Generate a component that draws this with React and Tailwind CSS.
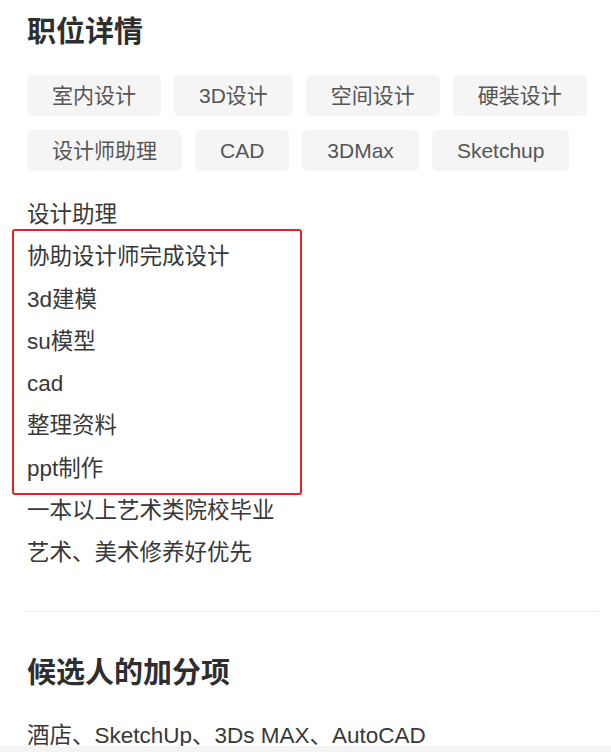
import React from 'react';

const tags = [
  ['室内设计', '3D设计', '空间设计', '硬装设计'],
  ['设计师助理', 'CAD', '3DMax', 'Sketchup'],
];

const boxed = ['协助设计师完成设计', '3d建模', 'su模型', 'cad', '整理资料', 'ppt制作'];

const font = { fontFamily: '"Liberation Sans", "Noto Sans CJK SC", sans-serif' };

export default function App() {
  return (
    <div className="w-[611px] h-[752px] bg-white flex flex-col overflow-hidden" style={font}>
      <div className="flex-1 overflow-hidden pl-[27px] pr-[13px] pt-[12px] text-[#333]">
        <h1 className="text-[29px] leading-[40px] font-bold text-[#2e2e2e]">职位详情</h1>

        <div className="mt-[23px] flex flex-col gap-[14px]">
          {tags.map((row, i) => (
            <div key={i} className="flex gap-[13px]">
              {row.map((t) => (
                <span
                  key={t}
                  className="h-[41px] px-[25px] flex items-center rounded-[5px] bg-[#f5f5f5] text-[21px] text-[#555]"
                >
                  {t}
                </span>
              ))}
            </div>
          ))}
        </div>

        <div className="mt-[23px] text-[22.5px] leading-[42.3px] text-[#383838]">
          <p>设计助理</p>
          <div className="relative">
            {boxed.map((t) => (
              <p key={t}>{t}</p>
            ))}
            <span className="absolute -top-[7px] -bottom-[5px] -left-[15px] w-[290px] border-2 border-[#e8231d] rounded-[3px] pointer-events-none" />
          </div>
          <p>一本以上艺术类院校毕业</p>
          <p>艺术、美术修养好优先</p>
        </div>

        <div className="mt-[36px] -ml-[2px] h-px bg-[#efefef]" />

        <h2 className="mt-[41px] text-[29px] leading-[40px] font-bold text-[#2e2e2e]">候选人的加分项</h2>
        <p className="mt-[22px] text-[22.5px] leading-[42.3px] text-[#383838] whitespace-nowrap">
          酒店、SketchUp、3Ds MAX、AutoCAD
        </p>
      </div>
      <div className="h-[6px] bg-[#f4f4f4]" />
    </div>
  );
}
